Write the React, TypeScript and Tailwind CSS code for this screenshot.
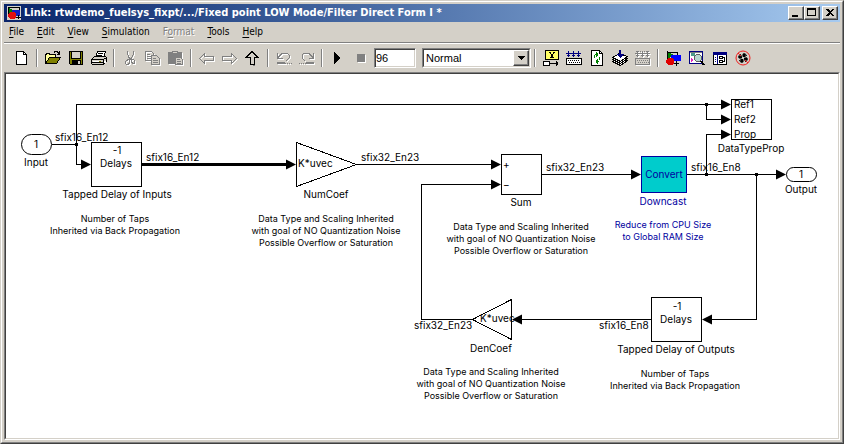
import { Fragment, type ReactNode } from "react";

/* ---------- toolbar icons, on a 16 x 16 grid ---------- */

function Icon({ children }: { children: ReactNode }) {
  return (
    <svg width="16" height="16" viewBox="0 0 16 16" shapeRendering="crispEdges" fill="none" aria-hidden="true">
      {children}
    </svg>
  );
}

/* Disabled glyphs carry a white shadow one pixel down and right. */
function Etched({ children }: { children: ReactNode }) {
  return (
    <Icon>
      <g transform="translate(1 1)" stroke="#fff" color="#fff">{children}</g>
      <g stroke="#808080" color="#808080">{children}</g>
    </Icon>
  );
}

const NewIcon = () => (
  <Icon>
    <path d="M2.500 1.500h7l3 3v10h-10z" fill="#fff" stroke="#000" />
    <path d="M9.500 1.500v3h3" stroke="#000" />
  </Icon>
);

const OpenIcon = () => (
  <Icon>
    <path d="M0.500 13.500v-9h1v-1h3v1h6v3" fill="#ffff9c" stroke="#000" />
    <path d="M0.500 13.500l4-6h11l-4 6z" fill="#808000" stroke="#000" />
    <path d="M8.500 2.500h1v-1h3v1h1v1h1M14.500 1v4M12 4.500h3" stroke="#000" />
  </Icon>
);

const SaveIcon = () => (
  <Icon>
    <path d="M1.500 1.500h13v13h-12l-1-1z" fill="#808000" stroke="#000" />
    <path d="M4 2h8v6h-8z" fill="#d4d0c8" />
    <path d="M3.500 2v6.500h9V2" stroke="#000" />
    <path d="M4 10h9v5h-9z" fill="#000" />
    <path d="M10 11h2v3h-2z" fill="#d4d0c8" />
  </Icon>
);

const PrintIcon = () => (
  <Icon>
    <path d="M4.500 7.500l2-6h8l-2 6z" fill="#fff" stroke="#000" />
    <path d="M7 3.500h5M6 5.500h5" stroke="#000" />
    <path d="M0.500 9.500l3-3h11l1 1v4l-3 3h-11l-1-1z" fill="#d4d0c8" stroke="#000" />
    <path d="M1 9.500h11.500l3-2M12.500 9.500v5M1 12.500h11" stroke="#000" />
    <path d="M2 11h8v1h-8zM13 11h2v2h-2z" fill="#fff" />
    <path d="M8 11h2v1h-2z" fill="#808000" />
  </Icon>
);

const CutIcon = () => (
  <Etched>
    <path d="M5.500 1v4M6.500 5v3M11.500 1v4M10.500 5v2M9.500 7v2M7.500 7v3M8.500 8v2" />
    <path d="M6.500 9.500h1v3l-1 2h-2l-1-1v-2l1-1zM9.500 9.500v2l1 2h2v-3l-1-1z" />
  </Etched>
);

const CopyIcon = () => (
  <Etched>
    <path d="M0.500 1.500h6l2 2v7h-8z" />
    <path d="M2 4.500h3M2 6.500h4M2 8.500h4" />
    <path d="M6.500 5.500h5l3 3v6h-8z" fill="#d4d0c8" />
    <path d="M8 8.500h3M8 10.500h5M8 12.500h5" />
  </Etched>
);

const PasteIcon = () => (
  <Etched>
    <path d="M0.500 2.500h13v11h-13z" fill="currentColor" />
    <path d="M4.500 1.500h5v2h-5z" fill="#d4d0c8" />
    <path d="M7.500 7.500h5l2 2v5h-7z" fill="#d4d0c8" />
    <path d="M9 9.500h3M9 11.500h4M9 13.500h4" />
  </Etched>
);

const BackIcon = () => (
  <Etched>
    <path d="M0.500 8.500l5-5v3h9v4h-9v3z" />
  </Etched>
);

const ForwardIcon = () => (
  <Etched>
    <path d="M14.500 8.500l-5-5v3h-9v4h9v3z" />
  </Etched>
);

const UpIcon = () => (
  <Icon>
    <path d="M9.500 9v6.500h-2" stroke="#808080" />
    <path d="M7 1.500l5.500 5.500h-3.500v7.500h-4v-7.500h-3.500z" fill="#d4d0c8" stroke="#000" />
  </Icon>
);

const UndoIcon = () => (
  <Etched>
    <path d="M1.500 3v5.500h5M2 7.500l3-3 2-1.500h4l2 2v3l-2 2h-1" />
    <path d="M1 13.500h9M11 13.500h1M13 13.500h1M15 13.500h1M1 12.500h8" />
  </Etched>
);

const RedoIcon = () => (
  <Etched>
    <path d="M14.500 3v5.500h-5M14 7.500l-3-3-2-1.500h-4l-2 2v3l2 2h1" />
    <path d="M6 13.500h9M4 13.500h1M2 13.500h1M0 13.500h1M7 12.500h8" />
  </Etched>
);

const PlayIcon = () => (
  <Icon>
    <path d="M4 2v12l6-6z" fill="#000" />
  </Icon>
);

const StopIcon = () => (
  <Icon>
    <path d="M5 5h8v8h-8z" fill="#fff" />
    <path d="M4 4h8v8h-8z" fill="#808080" />
  </Icon>
);

const SignalIcon = () => (
  <Icon>
    <path d="M2.500 0.500h13v9h-13z" fill="#ffff66" stroke="#000" />
    <path d="M6 2.500h2M10 2.500h2M7.500 3v1M10.500 3v1M8.500 4v1M9.500 4v1M8 5.500h2M8 6.500h2M7 7.500h4" stroke="#000" />
    <path d="M0.500 11.500h6v4h-6z" fill="#fff" stroke="#000" />
    <path d="M7 13.500h8M13.500 11v5M14.500 12v3" stroke="#000" />
  </Icon>
);

/* Three signals dropping into a grid; shared by both build icons. */
const downArrows = (
  <path d="M0 3.500h15M2.500 1v6M1 5.500h3M7.500 1v6M6 5.500h3M12.500 1v6M11 5.500h3" />
);
const gridBox = (
  <path d="M2 10.500h12M3 12.500h11" strokeDasharray="1 1" />
);

const LibraryIcon = () => (
  <Icon>
    <g stroke="#000080">{downArrows}</g>
    <path d="M0.500 8.500h15v6h-15z" fill="#fff" stroke="#000" />
    <g stroke="#000">{gridBox}</g>
  </Icon>
);

const RefreshIcon = () => (
  <Icon>
    <path d="M2.500 0.500h8l3 3v12h-11z" fill="#fff" stroke="#000" />
    <path d="M10.500 0.500v3h3" stroke="#000" />
    <path d="M5.500 8v-3M6 4.500h2M7.500 2v5M8.500 3v3" stroke="#008000" />
    <path d="M10.500 7v3M8 11.500h2M8.500 9v5M7.500 10v3" stroke="#008000" />
  </Icon>
);

const BuildIcon = () => (
  <Icon>
    <path d="M0.500 11.500l7-4 8 3-7 5z" fill="#fff" stroke="#000" />
    <path d="M0.500 9.500l7-4 8 3-7 5z" fill="#fff" stroke="#000" />
    <path d="M0.500 7.500l7-4 8 3-7 5z" fill="#fff" stroke="#000" />
    <path d="M7 0h2v4h3l-4 4-4-4h3z" fill="#000080" />
  </Icon>
);

const BuildGreyIcon = () => (
  <Etched>
    <path d="M0.500 8.500h14v6h-14z" fill="#d4d0c8" />
    {downArrows}
    {gridBox}
    <path d="M1 1.500h14" strokeDasharray="1 1" />
  </Etched>
);

const ModelIcon = () => (
  <Icon>
    <path d="M1 1l7 4-7 5z" fill="#008000" />
    <path d="M1.500 1v10M2 2.500h9.500V5" stroke="#000" />
    <path d="M5 5h10v6h-10z" fill="#0000ff" />
    <path d="M2 8h4l1 1h1v4l-2 2h-4l-2-2v-3z" fill="#e00000" />
    <path d="M10.500 11v3M8 13.500h5M10.500 13v3" stroke="#000" />
  </Icon>
);

const ExplorerIcon = () => (
  <Icon>
    <path d="M0.500 1.500h13v12h-13z" fill="#fff" stroke="#000080" />
    <path d="M2 3h4v3h-4z" fill="#4a9a8a" />
    <path d="M2 8l3 2-3 2z" fill="#e020c0" />
    <path d="M1 2h12v1h-12z" fill="#808080" />
    <circle cx="9" cy="8" r="3.500" fill="#b8d8d0" stroke="#606060" />
    <path d="M12 11l3 4" stroke="#000" strokeWidth="2" />
  </Icon>
);

const BrowserIcon = () => (
  <Icon>
    <path d="M1.500 2.500h13v12h-13z" fill="#fff" stroke="#000" />
    <path d="M1 2h14v3h-14z" fill="#000080" />
    <path d="M5.500 5v9M3 7.500h1M3 9.500h1M3 11.500h1" stroke="#000080" />
    <path d="M7.500 6.500h3v2h-3zM7.500 10.500h3v2h-3zM10.500 7.500h2v4h-2" stroke="#000" />
  </Icon>
);

/* Four-bladed fan behind a red ring and bar. */
const DebugIcon = () => (
  <svg width="16" height="16" viewBox="0 0 16 16" fill="none" aria-hidden="true">
    <path d="M8 7c-1-2-1-3 1-4l2 1-1 3zM9 8c2-1 3-1 4 1l-1 2-3-2zM8 9c1 2 1 3-1 4l-2-1 1-3zM7 8c-2 1-3 1-4-1l1-2 3 2z" fill="#000" />
    <path d="M5 4l2 3M11 12l-2-3M4 11l3-2M12 5l-3 2" stroke="#000" />
    <circle cx="8" cy="8" r="7" stroke="#f02020" />
    <path d="M3 3l3 3M10 10l3 3" stroke="#f02020" />
    <path d="M7 7h2v2h-2z" fill="#d4d0c8" />
  </svg>
);

type Tool = { name: string; icon: () => ReactNode; disabled?: boolean };

const leftTools: Tool[][] = [
  [{ name: "New model", icon: NewIcon }],
  [
    { name: "Open model", icon: OpenIcon },
    { name: "Save", icon: SaveIcon },
    { name: "Print", icon: PrintIcon },
  ],
  [
    { name: "Cut", icon: CutIcon, disabled: true },
    { name: "Copy", icon: CopyIcon, disabled: true },
    { name: "Paste", icon: PasteIcon, disabled: true },
  ],
  [
    { name: "Back", icon: BackIcon, disabled: true },
    { name: "Forward", icon: ForwardIcon, disabled: true },
    { name: "Go to parent system", icon: UpIcon },
  ],
  [
    { name: "Undo", icon: UndoIcon, disabled: true },
    { name: "Redo", icon: RedoIcon, disabled: true },
  ],
  [
    { name: "Start simulation", icon: PlayIcon },
    { name: "Stop", icon: StopIcon, disabled: true },
  ],
];

const rightTools: Tool[][] = [
  [
    { name: "Show signal names", icon: SignalIcon },
    { name: "Incremental build", icon: LibraryIcon },
    { name: "Refresh model blocks", icon: RefreshIcon },
    { name: "Update diagram", icon: BuildIcon },
    { name: "Build subsystem", icon: BuildGreyIcon, disabled: true },
  ],
  [
    { name: "Library browser", icon: ModelIcon },
    { name: "Model explorer", icon: ExplorerIcon },
    { name: "Model browser", icon: BrowserIcon },
    { name: "Debug", icon: DebugIcon },
  ],
];

const Separator = () => (
  <span className="mx-[3px] h-[18px] w-[2px] border-r border-l border-r-white border-l-[#808080]" />
);

function ToolGroup({ tools }: { tools: Tool[] }) {
  return (
    <div className="flex">
      {tools.map(({ name, icon: Glyph, disabled }) => (
        <button key={name} type="button" aria-label={name} disabled={disabled} className="flex h-[22px] w-[23px] items-center justify-center">
          <Glyph />
        </button>
      ))}
    </div>
  );
}

/* ---------- window chrome ---------- */

function WindowButton({ label, children }: { label: string; children: ReactNode }) {
  return (
    <button
      type="button"
      aria-label={label}
      className="h-[14px] w-4 border border-t-white border-r-[#404040] border-b-[#404040] border-l-white bg-[#d4d0c8] shadow-[inset_-1px_-1px_0_#808080]"
    >
      <svg width="14" height="12" viewBox="0 0 14 12" shapeRendering="crispEdges" fill="none" aria-hidden="true">
        {children}
      </svg>
    </button>
  );
}

function TitleBar() {
  return (
    <header className="flex h-[18px] items-center bg-linear-to-r from-[#0a246a] to-[#a6caf0] pr-[2px] pl-[3px]">
      <svg width="14" height="14" viewBox="0 0 14 14" shapeRendering="crispEdges" fill="none" aria-hidden="true">
        <path d="M0 0h14v14h-14z" fill="#d4d0c8" />
        <path d="M1 1l6 4-6 4z" fill="#008000" />
        <path d="M1.500 1v9M2 1.500h10V5" stroke="#000" />
        <path d="M5 4h8v6h-8z" fill="#1020c0" />
        <path d="M3 6h4l2 2v3l-2 2h-4l-2-2v-3z" fill="#e01010" />
        <path d="M11.500 9v4M9 11.500h5" stroke="#000" />
      </svg>
      <h1 className="ml-[3px] flex-1 truncate font-['DejaVu_Sans_Condensed','DejaVu_Sans',sans-serif] text-[11px] leading-4 font-bold text-white">
        Link: rtwdemo_fuelsys_fixpt/.../Fixed point LOW Mode/Filter Direct Form I *
      </h1>
      <div className="flex">
        <WindowButton label="Minimize">
          <path d="M3 8h6v2h-6z" fill="#000" />
        </WindowButton>
        <WindowButton label="Maximize">
          <path d="M2.500 1.500h8v7h-8zM2 2.500h9" stroke="#000" />
        </WindowButton>
      </div>
      <div className="ml-[2px] flex">
        <WindowButton label="Close">
          <path d="M3 2h2l2 2 2-2h2l-3 3.500 3 3.500h-2l-2-2-2 2h-2l3-3.500z" fill="#000" />
        </WindowButton>
      </div>
    </header>
  );
}

const menus = [
  { first: "F", rest: "ile" },
  { first: "E", rest: "dit" },
  { first: "V", rest: "iew" },
  { first: "S", rest: "imulation" },
  { before: "F", first: "o", rest: "rmat", disabled: true },
  { first: "T", rest: "ools" },
  { first: "H", rest: "elp" },
];

function MenuBar() {
  return (
    <nav className="flex h-5 items-center gap-[13px] pl-[5px] font-['DejaVu_Sans_Condensed','DejaVu_Sans',sans-serif] text-[10px] leading-4 text-black">
      {menus.map((m) => (
        <button
          key={m.first + m.rest}
          type="button"
          disabled={m.disabled}
          className="disabled:text-[#808080] disabled:[text-shadow:1px_1px_0_#fff]"
        >
          {m.before}
          <span className="underline underline-offset-2">{m.first}</span>
          {m.rest}
        </button>
      ))}
    </nav>
  );
}

function ToolBar() {
  return (
    <div className="flex h-[30px] items-center border-t border-t-[#808080] pl-[6px] shadow-[inset_0_1px_0_#fff]">
      {leftTools.map((tools, i) => (
        <Fragment key={i}>
          {i > 0 && <Separator />}
          <ToolGroup tools={tools} />
        </Fragment>
      ))}
      <input
        aria-label="Simulation stop time"
        defaultValue="96"
        className="ml-[2px] h-5 w-[42px] border border-t-[#808080] border-r-white border-b-white border-l-[#808080] bg-white pl-[1px] font-['Liberation_Sans',sans-serif] text-[11px] leading-4 text-black shadow-[inset_1px_1px_0_#404040,inset_-1px_-1px_0_#d4d0c8] outline-none"
      />
      <div className="relative ml-[6px] h-5 w-[109px] border border-t-[#808080] border-r-white border-b-white border-l-[#808080]">
        <select
          aria-label="Simulation mode"
          className="block h-full w-full appearance-none border border-t-[#404040] border-r-[#d4d0c8] border-b-[#d4d0c8] border-l-[#404040] bg-white pl-[2px] font-['Liberation_Sans',sans-serif] text-[11px] leading-4 text-black outline-none"
        >
          <option>Normal</option>
        </select>
        <span className="pointer-events-none absolute top-px right-px bottom-px flex w-4 items-center justify-center border border-t-white border-r-[#404040] border-b-[#404040] border-l-white bg-[#d4d0c8] shadow-[inset_-1px_-1px_0_#808080]">
          <svg width="7" height="4" viewBox="0 0 7 4" shapeRendering="crispEdges" aria-hidden="true">
            <path d="M0 0h7v1h-7zM1 1h5v1h-5zM2 2h3v1h-3zM3 3h1v1h-1z" />
          </svg>
        </span>
      </div>
      {rightTools.map((tools, i) => (
        <Fragment key={i}>
          <Separator />
          <ToolGroup tools={tools} />
        </Fragment>
      ))}
    </div>
  );
}

/* ---------- block diagram ---------- */

type Point = [number, number];

const wires: Point[][] = [
  [[51, 144], [76, 144], [76, 164], [86, 164]],
  [[76, 144], [76, 104], [726, 104]],
  [[706, 104], [706, 119], [726, 119]],
  [[356, 164], [496, 164]],
  [[472, 319], [421, 319], [421, 184], [496, 184]],
  [[541, 174], [636, 174]],
  [[686, 174], [780, 174]],
  [[706, 174], [706, 134], [726, 134]],
  [[756, 174], [756, 319], [706, 319]],
  [[651, 319], [516, 319]],
];

const rightArrows: Point[] = [
  [91, 164], [296, 164], [501, 164], [501, 184], [641, 174], [786, 174], [731, 104], [731, 119], [731, 134],
];
const leftArrows: Point[] = [[511, 319], [701, 319]];
const junctions: Point[] = [[76, 144], [706, 104], [706, 174], [756, 174]];

type Label = { x: number; y: number; text: string; blue?: boolean };

/* Centred on x: port numbers, block contents and block names. */
const names: Label[] = [
  { x: 36, y: 148, text: "1" },
  { x: 36, y: 166, text: "Input" },
  { x: 117, y: 154, text: "-1" },
  { x: 116, y: 167, text: "Delays" },
  { x: 117, y: 198, text: "Tapped Delay of Inputs" },
  { x: 326, y: 198, text: "NumCoef" },
  { x: 521, y: 206, text: "Sum" },
  { x: 664, y: 178, text: "Convert", blue: true },
  { x: 663, y: 205, text: "Downcast", blue: true },
  { x: 751, y: 152, text: "DataTypeProp" },
  { x: 801, y: 178, text: "1" },
  { x: 801, y: 193, text: "Output" },
  { x: 677, y: 310, text: "-1" },
  { x: 676, y: 323, text: "Delays" },
  { x: 676, y: 353, text: "Tapped Delay of Outputs" },
  { x: 491, y: 352, text: "DenCoef" },
];

/* Start at x: signal types and port labels. */
const signals: Label[] = [
  { x: 55, y: 141, text: "sfix16_En12" },
  { x: 146, y: 161, text: "sfix16_En12" },
  { x: 361, y: 161, text: "sfix32_En23" },
  { x: 546, y: 171, text: "sfix32_En23" },
  { x: 691, y: 171, text: "sfix16_En8" },
  { x: 599, y: 329, text: "sfix16_En8" },
  { x: 414, y: 329, text: "sfix32_En23" },
  { x: 298, y: 167, text: "K*uvec" },
  { x: 480, y: 322, text: "K*uvec" },
  { x: 734, y: 108, text: "Ref1" },
  { x: 734, y: 123, text: "Ref2" },
  { x: 734, y: 138, text: "Prop" },
  { x: 503, y: 168, text: "+" },
  { x: 503, y: 188, text: "−" },
];

const scaling = [
  "Data Type and Scaling Inherited",
  "with goal of NO Quantization Noise",
  "Possible Overflow or Saturation",
];
const taps = ["Number of Taps", "Inherited via Back Propagation"];

const notes: { x: number; y: number; lines: string[]; blue?: boolean }[] = [
  { x: 115, y: 222, lines: taps },
  { x: 326, y: 222, lines: scaling },
  { x: 521, y: 230, lines: scaling },
  { x: 663, y: 228, lines: ["Reduce from CPU Size", "to Global RAM Size"], blue: true },
  { x: 491, y: 375, lines: scaling },
  { x: 675, y: 377, lines: taps },
];

const inkClass = (blue?: boolean) => (blue ? "fill-[#0000a0]" : "fill-black");

function Diagram() {
  return (
    <svg width="832" height="364" viewBox="6 74 832 364" role="img" aria-label="Filter Direct Form I block diagram" className="block font-['Inter','Liberation_Sans',sans-serif]">
      <g transform="translate(0.500 0.500)" fill="none" stroke="#000" shapeRendering="crispEdges">
        {wires.map((w, i) => (
          <polyline key={i} points={w.map((p) => p.join(",")).join(" ")} />
        ))}
        <path d="M141 164h150" strokeWidth="3" />
        <rect x="91" y="142" width="50" height="44" fill="#fff" />
        <rect x="501" y="154" width="40" height="40" fill="#fff" />
        <rect x="641" y="156" width="45" height="36" fill="#00cccc" stroke="#0000a0" />
        <rect x="731" y="99" width="40" height="40" fill="#fff" />
        <rect x="651" y="297" width="50" height="44" fill="#fff" />
        <path d="M296 142l60 22-60 22z" fill="#fff" />
        <path d="M511 299l-39 20 39 20z" fill="#fff" />
      </g>
      <g transform="translate(0.500 0.500)" fill="#fff" stroke="#000">
        <rect x="21" y="134" width="30" height="20" rx="10" />
        <rect x="786" y="167" width="30" height="14" rx="7" />
      </g>
      <g className="text-[10px]">
        {names.map((n) => (
          <text key={`${n.x},${n.y}`} x={n.x} y={n.y} textAnchor="middle" className={inkClass(n.blue)}>
            {n.text}
          </text>
        ))}
        {signals.map((s) => (
          <text key={`${s.x},${s.y}`} x={s.x} y={s.y}>
            {s.text}
          </text>
        ))}
      </g>
      {rightArrows.map(([x, y]) => (
        <path key={`${x},${y}`} d={`M${x} ${y + 0.5}l-10 -5v10z`} />
      ))}
      {leftArrows.map(([x, y]) => (
        <path key={`${x},${y}`} d={`M${x + 1} ${y + 0.5}l10 -5v10z`} />
      ))}
      {junctions.map(([x, y]) => (
        <rect key={`${x},${y}`} x={x - 1} y={y - 1} width="3" height="3" />
      ))}
      <g className="text-[9px]" textAnchor="middle">
        {notes.map((n) => (
          <text key={`${n.x},${n.y}`} className={inkClass(n.blue)}>
            {n.lines.map((line, i) => (
              <tspan key={line} x={n.x} y={n.y + i * 12}>
                {line}
              </tspan>
            ))}
          </text>
        ))}
      </g>
    </svg>
  );
}

export default function App() {
  return (
    <div className="flex min-h-screen flex-col border border-t-[#d4d0c8] border-r-[#404040] border-b-[#404040] border-l-[#d4d0c8] bg-[#d4d0c8]">
      <div className="flex flex-1 flex-col border border-t-white border-r-[#808080] border-b-[#808080] border-l-white p-[2px]">
        <TitleBar />
        <MenuBar />
        <ToolBar />
        <main className="flex flex-1 flex-col border border-t-[#808080] border-r-white border-b-white border-l-[#808080]">
          <div className="flex-1 overflow-hidden border border-t-[#404040] border-r-[#d4d0c8] border-b-[#d4d0c8] border-l-[#404040] bg-white">
            <Diagram />
          </div>
        </main>
      </div>
    </div>
  );
}
